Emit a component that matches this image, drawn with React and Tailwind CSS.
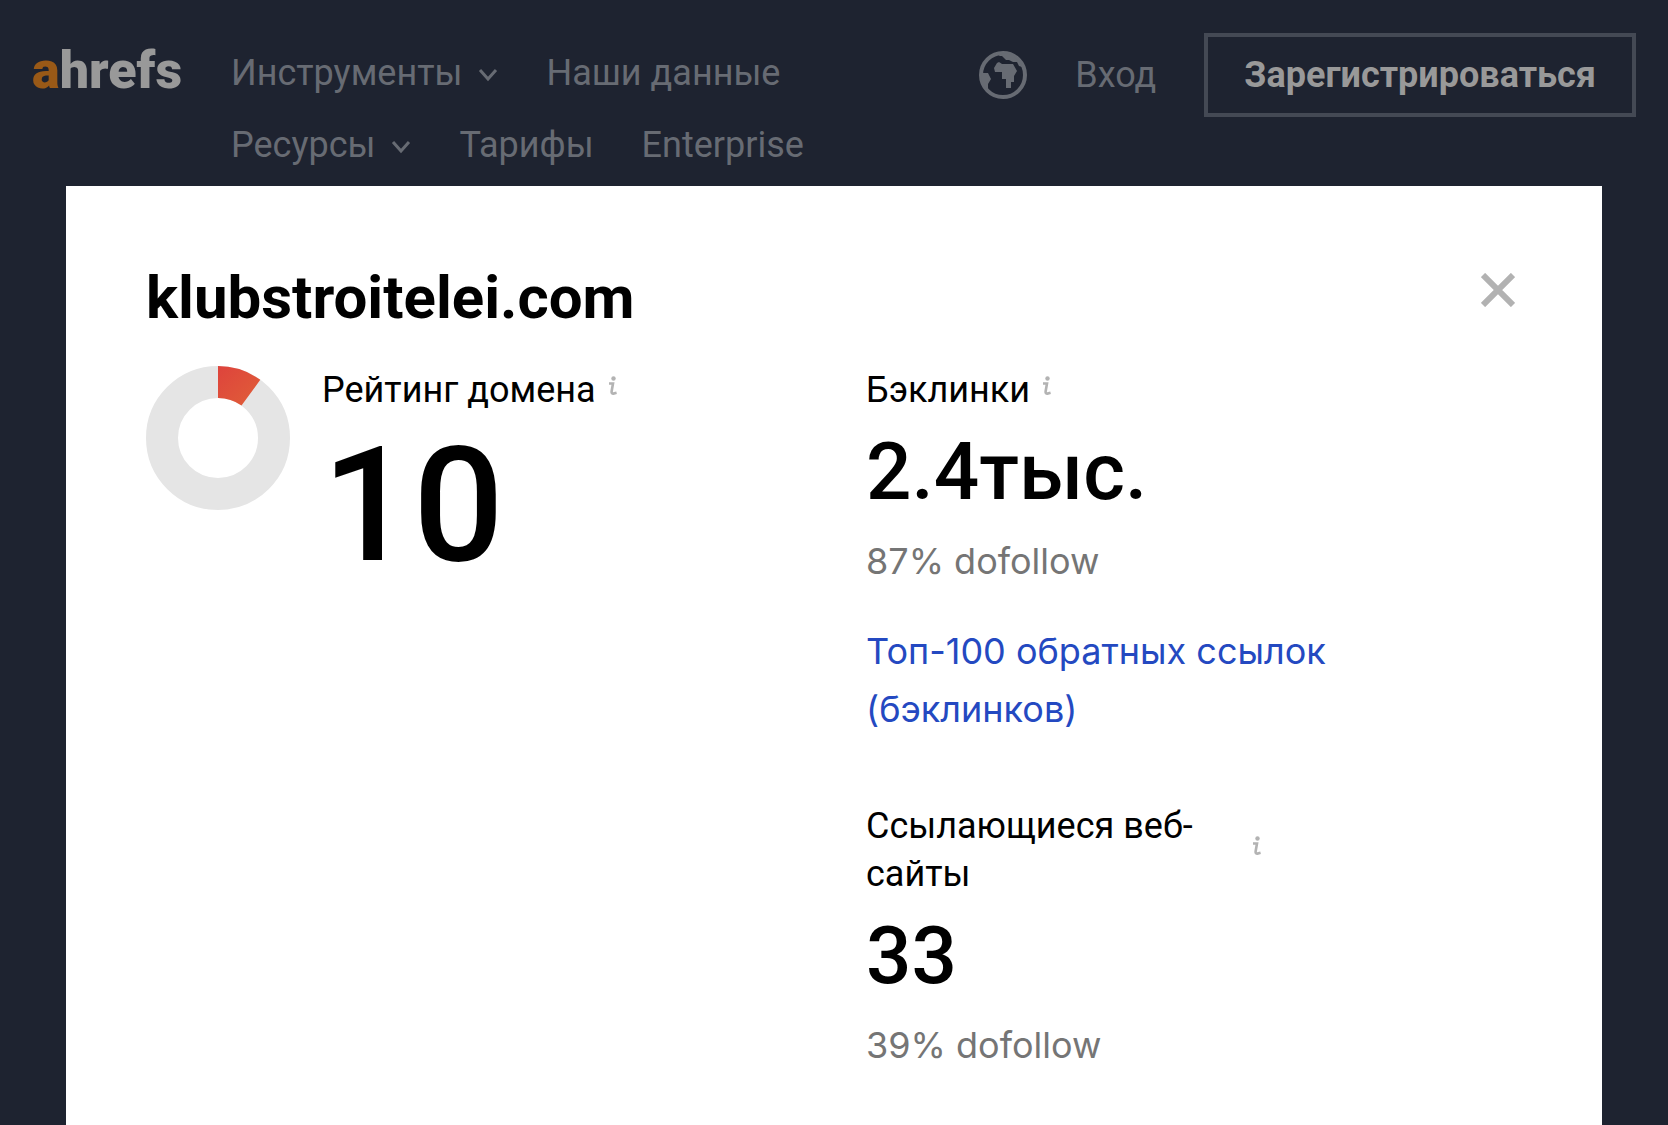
import React from 'react';

function NavItem({ children, menu }) {
  const cls = 'flex h-[72px] items-center gap-4 text-[36px] leading-[72px]';
  if (menu) {
    return (
      <button type="button" className={cls}>
        {children}
        <svg viewBox="0 0 20 14" className="mt-1 h-[14px] w-5" fill="none" stroke="currentColor" strokeWidth="3" aria-hidden="true">
          <path d="M2 2 L10 11 L18 2" />
        </svg>
      </button>
    );
  }
  return <a href="#" className={cls}>{children}</a>;
}

function Globe() {
  return (
    <svg viewBox="0 0 48 48" className="size-12" aria-hidden="true">
      <circle cx="24" cy="24" r="22" fill="none" stroke="currentColor" strokeWidth="4" />
      <path fill="currentColor" d="M19 5 L25 2 L34 4 L43 14 L43 16 L40 15 L38 11 L34 11 L30 9 L27 9 L23 5 Z" />
      <path fill="currentColor" d="M18 12 L20 11 L23 13 L34 13 L38 20 L35 25 V31 H32 V37 H27 V28 H23 V21 H16 L15 17 Z" />
      <path fill="currentColor" d="M2 22 H9 L12 28 L9 33 L9 40 L3 33 Z" />
    </svg>
  );
}

function Info() {
  return (
    <button type="button" aria-label="Подробнее" className="mb-2 shrink-0 text-[#b3b3b3]">
      <svg viewBox="0 0 10 20" className="h-5 w-[10px]" aria-hidden="true">
        <circle cx="5.5" cy="2.5" r="2.2" fill="currentColor" />
        <path d="M1 7.5 H5 L3.6 15.5 Q3.4 17.6 5.4 17.6 L8.6 16.8" fill="none" stroke="currentColor" strokeWidth="2.6" />
      </svg>
    </button>
  );
}

function Metric({ value, share }) {
  return (
    <>
      <p className="mt-4 text-[80px] font-medium leading-[84px]">{value}</p>
      <p className="mt-[18px] font-['Inter',sans-serif] leading-[58px] text-[#757575]">{share}</p>
    </>
  );
}

export default function App() {
  return (
    <div className="flex min-h-screen flex-col bg-[#1e2330] font-['Roboto',sans-serif]">
      <header className="flex items-start px-8 pt-[33px] text-[#676b73]">
        <a href="#" className="mr-[52px] mt-3 w-[147px] text-[52px] font-black leading-[52px] text-[#999999]"><span className="text-[#995917]">a</span>hrefs</a>
        <nav className="mt-1 flex max-w-[640px] flex-1 flex-wrap gap-x-12 pb-[5px]">
          <NavItem menu>Инструменты</NavItem>
          <NavItem>Наши данные</NavItem>
          <NavItem menu>Ресурсы</NavItem>
          <NavItem>Тарифы</NavItem>
          <NavItem>Enterprise</NavItem>
        </nav>
        <div className="ml-auto flex items-center gap-12">
          <button type="button" aria-label="Язык"><Globe /></button>
          <a href="#" className="text-[36px]">Вход</a>
          <a href="#" className="flex h-[84px] items-center border-4 border-[#444954] px-9 text-[36px] font-bold text-[#999999]">Зарегистрироваться</a>
        </div>
      </header>
      <main role="dialog" aria-labelledby="domain" className="mx-[66px] flex-1 bg-white px-20 pt-20 text-black">
        <div className="flex items-start justify-between">
          <h1 id="domain" className="text-[60px] font-bold leading-[64px]">klubstroitelei.com</h1>
          <button type="button" aria-label="Закрыть" className="mr-[7px] mt-[7px] text-[#b2b2b2]">
            <svg viewBox="0 0 34 34" className="size-[34px]" fill="none" stroke="currentColor" strokeWidth="6" aria-hidden="true">
              <path d="M2 2 L32 32 M32 2 L2 32" />
            </svg>
          </button>
        </div>
        <div className="mt-9 grid grid-cols-2 gap-x-16">
          <section className="flex items-start gap-8">
            <svg viewBox="0 0 144 144" className="size-36 shrink-0" aria-hidden="true">
              <defs>
                <linearGradient id="rating" x1="0" y1="0" x2="1" y2="1">
                  <stop offset="0" stopColor="#de433c" />
                  <stop offset="1" stopColor="#e05f38" />
                </linearGradient>
              </defs>
              <circle cx="72" cy="72" r="56" fill="none" stroke="#e5e5e5" strokeWidth="32" />
              <path d="M72 0 A72 72 0 0 1 114.3 13.8 L95.5 39.6 A40 40 0 0 0 72 32 Z" fill="url(#rating)" />
            </svg>
            <div>
              <h2 className="flex items-center gap-3 text-[36px] leading-[48px]">Рейтинг домена<Info /></h2>
              <p className="mt-3 text-[160px] font-medium leading-[160px]">10</p>
            </div>
          </section>
          <section className="text-[36px]">
            <h2 className="flex items-center gap-3 leading-[48px]">Бэклинки<Info /></h2>
            <Metric value="2.4тыс." share="87% dofollow" />
            <p className="mt-8 font-['Inter',sans-serif] leading-[58px]"><a href="#" className="text-[#2449c1]">Топ-100 обратных ссылок (бэклинков)</a></p>
            <div className="mt-16 flex items-center gap-3">
              <h2 className="w-[374px] leading-[48px]">Ссылающиеся веб-сайты</h2><Info />
            </div>
            <Metric value="33" share="39% dofollow" />
          </section>
        </div>
      </main>
    </div>
  );
}
